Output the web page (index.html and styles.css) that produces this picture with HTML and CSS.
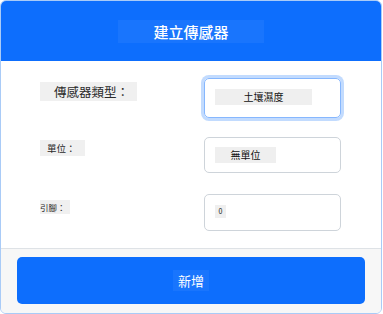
FILE: index.html
```html
<!DOCTYPE html>
<html lang="zh-TW">
<head>
    <meta charset="UTF-8">
    <meta name="viewport" content="width=device-width, initial-scale=1.0">
    <title>建立傳感器</title>
    <link rel="stylesheet" href="styles.css">
</head>
<body>

<div class="modal">
    <header class="modal-header">
        <h2 class="modal-title">建立傳感器</h2>
    </header>

    <div class="modal-body">
        <div class="form-row">
            <label class="form-label label-lg">傳感器類型：</label>
            <div class="field field-focus">
                <span class="field-value value-lg">土壤濕度</span>
            </div>
        </div>

        <div class="form-row">
            <label class="form-label label-md">單位：</label>
            <div class="field">
                <span class="field-value value-md">無單位</span>
            </div>
        </div>

        <div class="form-row row-pin">
            <label class="form-label label-sm">引腳：</label>
            <div class="field">
                <span class="field-value value-sm">0</span>
            </div>
        </div>
    </div>

    <footer class="modal-footer">
        <button class="btn-primary"><span class="btn-text">新增</span></button>
    </footer>
</div>

</body>
</html>
```

FILE: styles.css
```css
:root {
    --primary-color: #0d6efd;
    --border-color: #dee2e6;
    --chip-bg: #efefef;
    --text-color: #222;
    --font-family: "Noto Sans CJK TC", "Noto Sans CJK SC", "Liberation Sans", sans-serif;
}

body {
    margin: 0;
    font-family: var(--font-family);
    background: #fff;
    color: var(--text-color);
}

.modal {
    width: 380px;
    height: 312px;
    border: 1px solid #a9cbf7;
    border-radius: 6px;
    overflow: hidden;
    display: flex;
    flex-direction: column;
    background: #fff;
}

.modal-header {
    height: 60px;
    background: var(--primary-color);
    display: flex;
    justify-content: center;
    align-items: flex-start;
    padding-top: 19px;
    box-sizing: border-box;
}

.modal-title {
    margin: 0;
    width: 146px;
    height: 23px;
    background: rgba(255,255,255,0.05);
    color: #fff;
    font-size: 15px;
    font-weight: 500;
    line-height: 23px;
    text-align: center;
}

.modal-body {
    flex: 1;
    padding: 17px 0 0 39px;
    display: flex;
    flex-direction: column;
    gap: 19px;
}

.form-row {
    display: grid;
    grid-template-columns: 164px 137px;
    align-items: start;
}

.row-pin {
    margin-top: 2px;
}

.form-label {
    background: #f0f0f0;
    color: #2a2a2a;
    font-weight: 400;
    white-space: nowrap;
}

.label-lg {
    width: 97px;
    height: 19px;
    margin-top: 4px;
    font-size: 12.5px;
    line-height: 19px;
    text-indent: 14px;
}

.label-md {
    width: 45px;
    height: 16px;
    margin-top: 3px;
    font-size: 9.5px;
    line-height: 16px;
    text-indent: 7px;
}

.label-sm {
    width: 30px;
    height: 14px;
    margin-top: 6px;
    font-size: 8.5px;
    line-height: 14px;
}

.field {
    height: 36px;
    border: 1px solid #ced4da;
    border-radius: 5px;
    padding: 9px 0 0 10px;
    box-sizing: border-box;
}

.field-focus {
    height: 40px;
    border-color: #86b7fe;
    box-shadow: 0 0 0 3px rgba(13,110,253,0.25);
    padding-top: 10px;
}

.row-pin .field {
    height: 37px;
    padding-top: 10px;
}

.field-value {
    display: block;
    background: var(--chip-bg);
    color: #111;
    text-align: center;
}

.value-lg {
    width: 97px;
    height: 16px;
    font-size: 10px;
    line-height: 16px;
}

.value-md {
    width: 61px;
    height: 16px;
    font-size: 10px;
    line-height: 16px;
}

.value-sm {
    width: 11px;
    height: 13px;
    font-size: 7px;
    line-height: 13px;
}

.modal-footer {
    height: 65px;
    background: #f7f7f7;
    border-top: 1px solid var(--border-color);
    padding: 8px 16px 8px 16px;
    box-sizing: border-box;
}

.btn-primary {
    width: 100%;
    height: 47px;
    border: none;
    border-radius: 5px;
    background: var(--primary-color);
    display: flex;
    justify-content: center;
    align-items: center;
    font-family: var(--font-family);
}

.btn-text {
    width: 36px;
    height: 21px;
    background: rgba(255,255,255,0.05);
    color: #fff;
    font-size: 13px;
    line-height: 21px;
}
```
